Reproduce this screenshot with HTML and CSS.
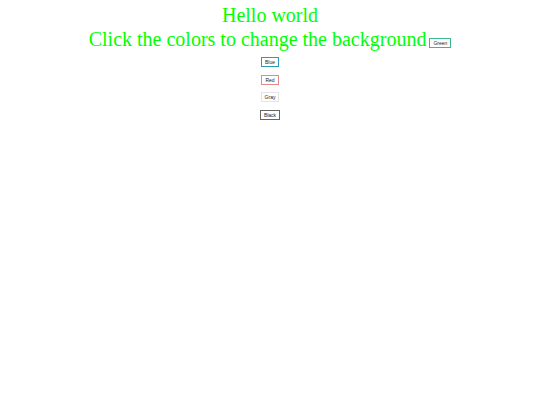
FILE: index.html
```html
<!DOCTYPE html>
<html>
<head>
<meta charset="utf-8">
<link rel="stylesheet" href="styles.css">
</head>
<body>
<div class="page">
  <div class="title">Hello world</div>
  <div class="title">Click the colors to change the background<button class="btn green">Green</button></div>
  <div class="list">
    <button class="btn blue">Blue</button>
    <button class="btn red">Red</button>
    <button class="btn gray">Gray</button>
    <button class="btn black">Black</button>
  </div>
</div>
</body>
</html>
```
FILE: styles.css
```css
html, body {
  margin: 0;
  padding: 0;
  background: #ffffff;
}
.page {
  padding-top: 3px;
  text-align: center;
}
.title {
  font-family: "Liberation Serif", serif;
  font-size: 20px;
  color: #00ff00;
  line-height: 24px;
}
.list {
  display: flex;
  flex-direction: column;
  align-items: center;
  gap: 7.5px;
  padding-top: 6px;
}
.btn {
  font-family: "Liberation Sans", Arial, sans-serif;
  font-size: 5px;
  line-height: 6px;
  color: #222;
  background: #ffffff;
  border: 1px solid #888;
  padding: 1px 3px;
  margin: 0;
  border-radius: 0;
}
.green { border-color: #3db88a; margin-left: 3px; vertical-align: 1px; }
.blue { border-color: #2e9ab8; }
.red { border-color: #e08a8a; }
.gray { border-color: #e4e4e4; }
.black { border-color: #666666; }
```
